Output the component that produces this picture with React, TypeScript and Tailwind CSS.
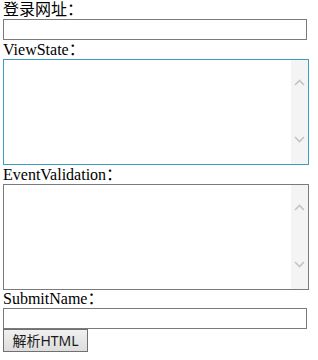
import React from 'react';

const serif = { fontFamily: '"Liberation Serif", "Noto Sans CJK SC", serif' };

function Chevron({ up }: { up?: boolean }) {
  return (
    <svg width="11" height="7" viewBox="0 0 11 7" className="block">
      <path
        d={up ? 'M1 6 L5.5 1.5 L10 6' : 'M1 1 L5.5 5.5 L10 1'}
        fill="none"
        stroke="#c4c4c4"
        strokeWidth="1.6"
      />
    </svg>
  );
}

function Area({ focused }: { focused?: boolean }) {
  return (
    <div
      className={`flex h-[106px] w-[306px] border bg-white ${
        focused ? 'border-[#3d9cc4]' : 'border-[#7a7a7a]'
      }`}
    >
      <textarea className="flex-1 resize-none overflow-hidden outline-none" />
      <div className="flex w-[17px] flex-col items-center justify-between bg-[#f4f4f4] pt-[19px] pb-[21px]">
        <Chevron up />
        <Chevron />
      </div>
    </div>
  );
}

function Label({ children }: { children: React.ReactNode }) {
  return (
    <div className="h-[19px] text-[16px] leading-[19px] text-black" style={serif}>
      {children}
    </div>
  );
}

export default function App() {
  return (
    <div className="h-[360px] w-[318px] bg-white px-[3px]">
      <Label>登录网址：</Label>
      <input className="block h-[21px] w-[304px] border border-[#7a7a7a] outline-none" />
      <Label>ViewState：</Label>
      <Area focused />
      <Label>EventValidation：</Label>
      <Area />
      <div className="h-[18px] text-[16px] leading-[18px] text-black" style={serif}>
        SubmitName：
      </div>
      <input className="block h-[21px] w-[304px] border border-[#7a7a7a] outline-none" />
      <button
        className="flex h-[23px] w-[85px] items-center justify-center border border-[#707070] bg-gradient-to-b from-[#f0f0f0] to-[#dddddd] text-[14px] text-[#1a1a1a]"
        style={{ fontFamily: '"Noto Sans", "Noto Sans CJK SC", sans-serif' }}
      >
        解析HTML
      </button>
    </div>
  );
}
